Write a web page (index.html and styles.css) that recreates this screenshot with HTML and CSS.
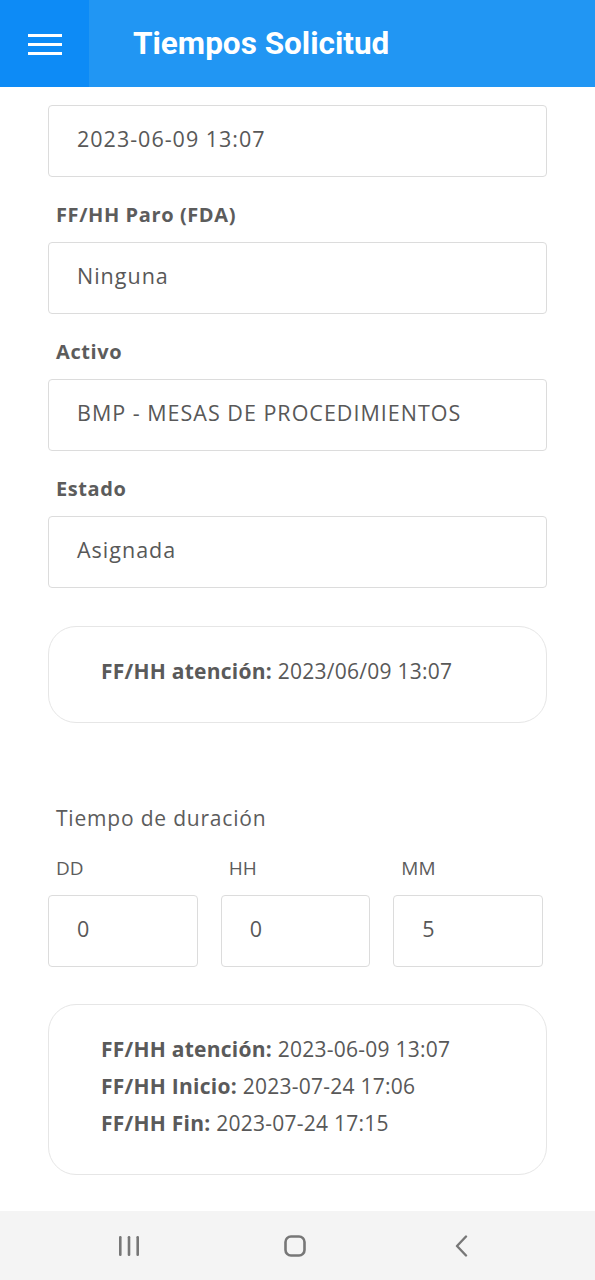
FILE: index.html
```html
<!DOCTYPE html>
<html lang="es">
<head>
<meta charset="utf-8">
<title>Tiempos Solicitud</title>
<link rel="stylesheet" href="styles.css">
</head>
<body>
<div class="page">
  <header class="appbar">
    <div class="menu-box">
      <svg class="menu-icon" width="34" height="24" viewBox="0 0 34 24"><rect x="0" y="2" width="34" height="3" fill="#fff"/><rect x="0" y="11" width="34" height="3" fill="#fff"/><rect x="0" y="20" width="34" height="3" fill="#fff"/></svg>
    </div>
    <h1 class="title">Tiempos Solicitud</h1>
  </header>
  <main class="content">
    <div class="field first"><span>2023-06-09 13:07</span></div>
    <div class="label">FF/HH Paro (FDA)</div>
    <div class="field"><span>Ninguna</span></div>
    <div class="label">Activo</div>
    <div class="field"><span>BMP - MESAS DE PROCEDIMIENTOS</span></div>
    <div class="label">Estado</div>
    <div class="field"><span>Asignada</span></div>

    <div class="card card-one">
      <p class="line"><b>FF/HH atención:</b> 2023/06/09 13:07</p>
    </div>

    <div class="section-title">Tiempo de duración</div>
    <div class="duration">
      <div class="dur-col">
        <div class="dur-label">DD</div>
        <div class="field small"><span>0</span></div>
      </div>
      <div class="dur-col">
        <div class="dur-label">HH</div>
        <div class="field small"><span>0</span></div>
      </div>
      <div class="dur-col">
        <div class="dur-label">MM</div>
        <div class="field small"><span>5</span></div>
      </div>
    </div>

    <div class="card card-two">
      <p class="line"><b>FF/HH atención:</b> 2023-06-09 13:07</p>
      <p class="line"><b>FF/HH Inicio:</b> 2023-07-24 17:06</p>
      <p class="line"><b>FF/HH Fin:</b> 2023-07-24 17:15</p>
    </div>
  </main>
  <nav class="sysnav">
    <svg width="22" height="22" viewBox="0 0 22 22"><rect x="1" y="1" width="2.6" height="20" rx="1.2" fill="#777"/><rect x="9.7" y="1" width="2.6" height="20" rx="1.2" fill="#777"/><rect x="18.4" y="1" width="2.6" height="20" rx="1.2" fill="#777"/></svg>
    <svg width="22" height="22" viewBox="0 0 22 22"><rect x="1.5" y="1.5" width="19" height="19" rx="5.5" fill="none" stroke="#777" stroke-width="2.6"/></svg>
    <svg width="22" height="22" viewBox="0 0 22 22"><path d="M16 1.5 L7 11 L16 20.5" fill="none" stroke="#777" stroke-width="2.4" stroke-linecap="round" stroke-linejoin="round"/></svg>
  </nav>
</div>
</body>
</html>
```
FILE: styles.css
```css
* { box-sizing: border-box; }
html, body { margin: 0; padding: 0; background: #fff; }
body {
  font-family: "Open Sans", "Noto Sans", sans-serif;
  color: #555;
}
.page {
  width: 595px;
  height: 1280px;
  display: flex;
  flex-direction: column;
  overflow: hidden;
}
.appbar {
  height: 87px;
  flex: none;
  display: flex;
  align-items: center;
  background: #2196f3;
}
.menu-box {
  width: 89px;
  height: 87px;
  background: #0d8bf6;
  display: flex;
  align-items: center;
  padding-left: 28px;
}
.title {
  margin: 0 0 0 44px;
  padding-bottom: 1px;
  font-family: Roboto, sans-serif;
  font-weight: 700;
  font-size: 31.5px;
  color: #fff;
}
.content {
  flex: 1;
  padding: 18px 48px 0 48px;
}
.field {
  height: 72px;
  border: 1px solid #dcdcdc;
  border-radius: 4px;
  display: flex;
  align-items: center;
  padding: 0 0 5px 28px;
  font-size: 21.5px;
  letter-spacing: 1px;
  color: #585858;
}
.label {
  padding: 25px 0 14px 8px;
  line-height: 26px;
  font-size: 20px;
  letter-spacing: 0.6px;
  font-weight: 700;
  color: #5c5c5c;
}
.card {
  border: 1.5px solid #e6e6e6;
  border-radius: 28px;
  padding-left: 52px;
}
.card-one {
  margin-top: 38px;
  height: 97px;
  display: flex;
  align-items: center;
  padding-bottom: 6px;
}
.card-two {
  margin-top: 37px;
  height: 171px;
  padding-top: 26px;
}
.line {
  margin: 0;
  line-height: 37px;
  font-size: 21px;
  letter-spacing: 0.25px;
  color: #585858;
}
.line b { font-weight: 700; color: #5a5a5a; }
.section-title {
  margin-top: 82px;
  padding-left: 8px;
  line-height: 26px;
  font-size: 21px;
  letter-spacing: 0.8px;
  color: #5c5c5c;
}
.duration {
  margin-top: 24px;
  width: 495px;
  display: grid;
  grid-template-columns: 1fr 1fr 1fr;
  column-gap: 23px;
}
.dur-label {
  padding-left: 8px;
  line-height: 26px;
  font-size: 19px;
  color: #5c5c5c;
  margin-bottom: 14px;
}
.field.small { padding-left: 28px; }
.sysnav {
  height: 69px;
  flex: none;
  background: #f4f4f4;
  display: flex;
  align-items: center;
  gap: 144px;
  padding-left: 118px;
}
```
